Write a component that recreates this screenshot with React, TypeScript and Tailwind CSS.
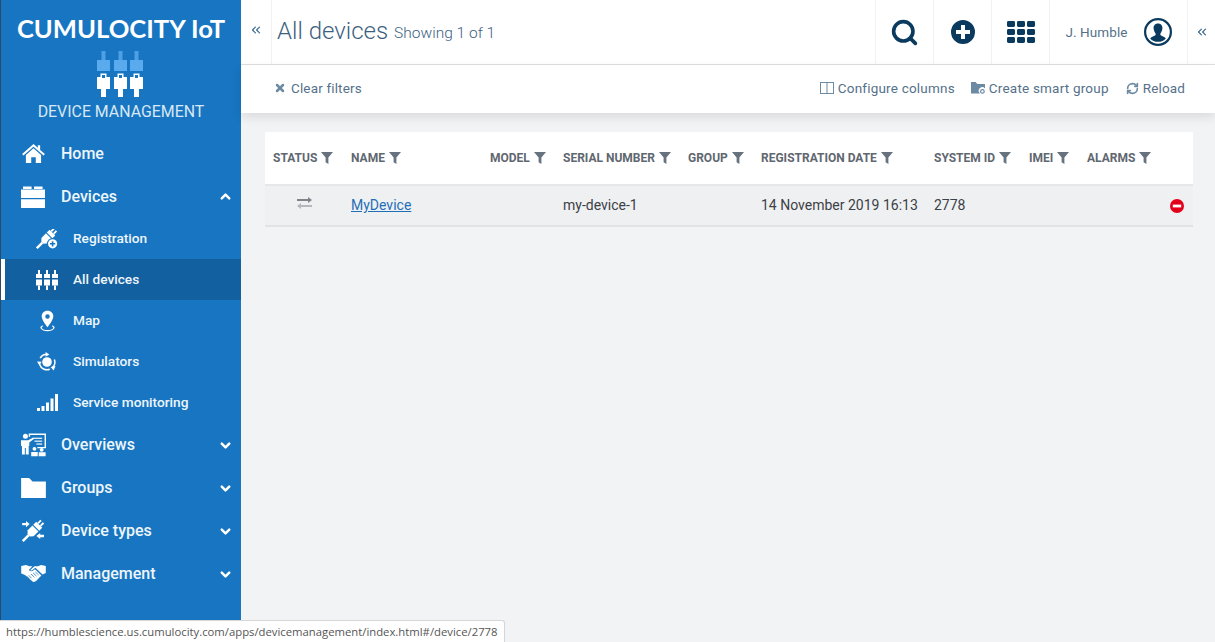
import React from 'react';
import { ChevronDown, ChevronUp, ChevronsLeft, Search, X, RefreshCw } from 'lucide-react';

type IconProps = { className?: string };

const HomeIcon = ({ className }: IconProps) => (
  <svg viewBox="0 0 24 20" className={className} fill="currentColor">
    <path d="M12 0 L16.5 4 V1.2 H19 V6.2 L24 10.6 L22.6 12 L12 2.8 L1.4 12 L0 10.6 Z" />
    <path d="M4 11.6 L12 4.6 L20 11.6 V20 H14.4 V14 H9.6 V20 H4 Z" />
  </svg>
);

const BoxesIcon = ({ className }: IconProps) => (
  <svg viewBox="0 0 24 22" className={className} fill="currentColor">
    <path d="M2 .5 H10.6 V3 H2 Z M13 .5 H21.6 V3 H13 Z" />
    <path d="M0 3.6 H24 V12 H0 Z M0 13.2 H24 V22 H0 Z" />
  </svg>
);

const PlugsIcon = ({ className }: IconProps) => (
  <svg viewBox="0 0 22 20" className={className} fill="currentColor">
    {[0, 8, 16].map(x => (
      <g key={x}>
        <rect x={x + 2} y={0} width={2} height={4} />
        <rect x={x} y={4} width={6} height={4} />
        <rect x={x} y={9.5} width={6} height={6} />
        <rect x={x + 2} y={15.5} width={2} height={4.5} />
      </g>
    ))}
  </svg>
);

const LogoPlugs = ({ className }: IconProps) => (
  <svg viewBox="0 0 48 46" className={className}>
    {[0, 17, 33].map(x => (
      <g key={x}>
        <rect x={x + 4.5} y={0} width={4} height={9} fill="#4d9fe6" />
        <rect x={x} y={9} width={13} height={11} fill="#5aaaee" />
        <path d={`M${x} 26 H${x + 3.5} V22.5 H${x + 9.5} V26 H${x + 13} V38 H${x + 9} V46 H${x + 4} V38 H${x} Z`} fill="#fff" />
        <rect x={x + 5} y={24} width={3} height={3} fill="#1775c1" />
      </g>
    ))}
  </svg>
);

// diagonal plug shared by the registration and device types icons
const DiagonalPlug = ({ x, y, scale = 1 }: { x: number; y: number; scale?: number }) => (
  <g transform={`translate(${x} ${y}) rotate(45) scale(${scale})`}>
    <rect x="-2.6" y="-12.5" width="1.8" height="4" />
    <rect x="0.8" y="-12.5" width="1.8" height="4" />
    <rect x="-4" y="-8.5" width="8" height="4" />
    <path d="M-4 -3.4 H4 V3 L1.6 5.6 H-1.6 L-4 3 Z" />
    <rect x="-1.2" y="5.6" width="2.4" height="8" />
  </g>
);

const PlugPlusIcon = ({ className }: IconProps) => (
  <svg viewBox="0 0 22 20" className={className} fill="currentColor">
    <DiagonalPlug x={10.4} y={9.6} />
    <circle cx="16.6" cy="14.8" r="5.8" fill="#1775c1" />
    <circle cx="16.6" cy="14.8" r="4.6" />
    <path d="M15.8 12.2 H17.4 V14 H19.2 V15.6 H17.4 V17.4 H15.8 V15.6 H14 V14 H15.8 Z" fill="#1775c1" />
  </svg>
);

const MapPinIcon = ({ className }: IconProps) => (
  <svg viewBox="0 0 16 22" className={className} fill="currentColor">
    <path fillRule="evenodd" d="M8 0 C12 0 14.2 2.8 14.2 6 C14.2 9.4 10.6 14.4 8 17.6 C5.4 14.4 1.8 9.4 1.8 6 C1.8 2.8 4 0 8 0 Z M8 3.8 A2.4 2.4 0 1 0 8 8.6 A2.4 2.4 0 1 0 8 3.8 Z" />
    <path d="M3 15.4 C.6 16.4 0 17.6 .6 18.8 C1.6 21 5 22 8 22 C11 22 14.4 21 15.4 18.8 C16 17.6 15.4 16.4 13 15.4 L13 16.8 C14.2 17.4 14.4 18 14 18.6 C13.2 20 10.6 20.7 8 20.7 C5.4 20.7 2.8 20 2 18.6 C1.6 18 1.8 17.4 3 16.8 Z" />
  </svg>
);

const SimulatorIcon = ({ className }: IconProps) => (
  <svg viewBox="0 0 20 20" className={className} fill="currentColor">
    <circle cx="10" cy="10" r="4.8" />
    <g fill="none" stroke="currentColor" strokeWidth="1.5">
      <path d="M3.2 6.2 A7.8 7.8 0 0 1 9 2.3" />
      <path d="M17.4 7.4 A7.8 7.8 0 0 1 15.4 15.6" />
      <path d="M12.8 17.3 A7.8 7.8 0 0 1 2.6 12.2" />
    </g>
    <path d="M8.6 0 L12.4 2.4 L8.6 4.8 Z" />
    <path d="M18.6 14 L16.6 18.4 L13.6 15 Z" />
    <path d="M0 9.6 L4.6 9.8 L2.4 13.6 Z" />
  </svg>
);

const SignalIcon = ({ className }: IconProps) => (
  <svg viewBox="0 0 21 17" className={className} fill="currentColor">
    <rect x="0" y="14" width="3" height="3" />
    <rect x="4.5" y="12" width="3" height="5" />
    <rect x="9" y="8.5" width="3" height="8.5" />
    <rect x="13.5" y="4.5" width="3" height="12.5" />
    <rect x="18" y="0" width="3" height="17" />
  </svg>
);

const OverviewIcon = ({ className }: IconProps) => (
  <svg viewBox="0 0 26 24" className={className} fill="currentColor">
    <path fillRule="evenodd" d="M8 0 H26 V15.5 H17 V14 H24.5 V1.5 H9.5 V3.5 H8 Z" />
    <rect x="12" y="4.4" width="10" height="1.2" />
    <rect x="14" y="7.4" width="8" height="1.2" />
    <rect x="16" y="10.4" width="6" height="1.2" />
    <circle cx="4.6" cy="3" r="2.6" />
    <path d="M0 7 H7.4 L12.4 4.4 L13.4 5.8 L8.6 9.4 V13 H8 V22 H5 V15 H4 V22 H1 V13 H0 Z" />
    <circle cx="14" cy="16" r="2" />
    <circle cx="21.5" cy="17" r="2" />
    <path d="M10.6 19.4 H17.4 V23.6 H10.6 Z M18.4 19.6 H25.6 V23.6 H18.4 Z" />
  </svg>
);

const FolderIcon = ({ className }: IconProps) => (
  <svg viewBox="0 0 26 21" className={className} fill="currentColor">
    <path d="M0 0 H8.4 L12 3.8 H26 V21 H0 Z" />
  </svg>
);

const CrossPlugIcon = ({ className }: IconProps) => (
  <svg viewBox="0 0 25 24" className={className} fill="currentColor">
    <DiagonalPlug x={12.4} y={12} scale={1.1} />
    <path d="M1.2 3.6 H5.2 V1.6 L9 4.8 L5.2 8 V6 H1.2 Z" />
    <path d="M24 16 H20 V14 L16 17.2 L20 20.4 V18.4 H24 Z" />
  </svg>
);

const HandshakeIcon = ({ className }: IconProps) => (
  <svg viewBox="0 0 26 18" className={className} fill="currentColor">
    <path d="M0 1 L5 0 C7.4 1.2 9.4 1.6 12 1.4 L8 5.4 C9.2 7 11.4 7 13 5.6 L14.6 4.4 L21.4 11 L17 15.6 C15.6 17.4 13.6 18.4 12 17.6 L4 10.6 L0 9 Z" />
    <path d="M14 1.2 C16.6 1.6 18.6 1 21 0 L26 1 V8.6 L22.6 10 L15 3 L11.6 5.6 C10.8 6 10 5.8 9.6 5.2 Z" />
    <g stroke="#1775c1" strokeWidth=".8" fill="none">
      <path d="M8 11 L11 14 M10.4 9.6 L14 13 M12.6 8.4 L16.2 11.8 M15 7.4 L18.4 10.6 M6 12 L9 15" />
    </g>
  </svg>
);

const FilterIcon = ({ className }: IconProps) => (
  <svg viewBox="0 0 12 12" className={className} fill="currentColor">
    <path d="M0 0 H12 L7.4 5.4 V12 L4.6 10.2 V5.4 Z" />
  </svg>
);

const ColumnsIcon = ({ className }: IconProps) => (
  <svg viewBox="0 0 14 12" className={className} fill="none" stroke="currentColor" strokeWidth="1">
    <rect x=".5" y=".5" width="13" height="11" />
    <path d="M7 .5 V11.5" />
  </svg>
);

const SmartFolderIcon = ({ className }: IconProps) => (
  <svg viewBox="0 0 14 12" className={className} fill="currentColor">
    <path d="M0 0 H4.6 L6.4 2 H14 V6.4 A3.4 3.4 0 0 0 8.6 11 V11.6 H0 Z" />
    <circle cx="11.4" cy="9.4" r="1.8" fill="none" stroke="currentColor" strokeWidth="1.2" />
  </svg>
);

const UserCircleIcon = ({ className }: IconProps) => (
  <svg viewBox="0 0 28 28" className={className} fill="currentColor">
    <path fillRule="evenodd" d="M14 0 A14 14 0 1 1 14 28 A14 14 0 1 1 14 0 Z M14 2.2 A11.8 11.8 0 1 0 14 25.8 A11.8 11.8 0 1 0 14 2.2 Z" />
    <path d="M14 5.4 C17 5.4 18.6 7.6 18.4 10.6 C18.2 12.8 17.4 14.4 16.4 15.4 V17 C17.4 18 20.8 18.8 21.8 20.4 C20 22.6 17.2 23.8 14 23.8 C10.8 23.8 8 22.6 6.2 20.4 C7.2 18.8 10.6 18 11.6 17 V15.4 C10.6 14.4 9.8 12.8 9.6 10.6 C9.4 7.6 11 5.4 14 5.4 Z" />
  </svg>
);

const PlusCircleIcon = ({ className }: IconProps) => (
  <svg viewBox="0 0 24 24" className={className} fill="currentColor">
    <path fillRule="evenodd" d="M12 0 A12 12 0 1 1 12 24 A12 12 0 1 1 12 0 Z M10 5 V10 H5 V14 H10 V19 H14 V14 H19 V10 H14 V5 Z" />
  </svg>
);

const AppsIcon = ({ className }: IconProps) => (
  <svg viewBox="0 0 28 22" className={className} fill="currentColor">
    {[0, 10, 20].map(x =>
      [0, 8, 16].map(y => <rect key={`${x}-${y}`} x={x} y={y} width={8} height={6} rx={1.4} />)
    )}
  </svg>
);

const ExchangeIcon = ({ className }: IconProps) => (
  <svg viewBox="0 0 15 12" className={className}>
    <path d="M0 2 H11 V0 L15 3 L11 6 V4 H0 Z" fill="#7d8389" />
    <path d="M15 8 H4 V6 L0 9 L4 12 V10 H15 Z" fill="#b4b8bc" />
  </svg>
);

const AlarmIcon = ({ className }: IconProps) => (
  <svg viewBox="0 0 14 14" className={className}>
    <circle cx="7" cy="7" r="7" fill="#e2001a" />
    <rect x="2.8" y="5.6" width="8.4" height="2.8" fill="#fff" />
  </svg>
);

const NavItem = ({ icon, label, open }: { icon: React.ReactNode; label: string; open?: boolean }) => (
  <div className="h-[43px] flex items-center relative text-white">
    <div className="w-[60px] flex justify-center pl-[4px] shrink-0">{icon}</div>
    <span className="text-[16px] font-medium text-[#eef5fb]">{label}</span>
    {open === undefined ? null : open ? (
      <ChevronUp className="absolute right-[8px] top-[14px] w-[15px] h-[15px]" strokeWidth={4} />
    ) : (
      <ChevronDown className="absolute right-[8px] top-[15px] w-[15px] h-[15px]" strokeWidth={4} />
    )}
  </div>
);

const SubItem = ({ icon, label, active }: { icon: React.ReactNode; label: string; active?: boolean }) => (
  <div className={`h-[41px] flex items-center text-white border-l-4 ${active ? 'bg-[#12609f] border-white' : 'border-transparent'}`}>
    <div className="w-[68px] flex justify-center pl-[16px] shrink-0">{icon}</div>
    <span className="text-[13.7px] font-medium text-[#eef5fb]">{label}</span>
  </div>
);

const columns = [
  { label: 'STATUS', className: 'w-[78px]' },
  { label: 'NAME', className: 'w-[139px]' },
  { label: 'MODEL', className: 'w-[73px]' },
  { label: 'SERIAL NUMBER', className: 'w-[125px]' },
  { label: 'GROUP', className: 'w-[73px]' },
  { label: 'REGISTRATION DATE', className: 'w-[173px]' },
  { label: 'SYSTEM ID', className: 'w-[95px]' },
  { label: 'IMEI', className: 'w-[58px]' },
  { label: 'ALARMS', className: 'w-[114px]' },
];

const HeaderCell = ({ children, className }: { children: React.ReactNode; className?: string }) => (
  <div className={`h-full flex items-center justify-center border-l border-[#f2f2f2] text-[#0b3a5f] ${className}`}>{children}</div>
);

export default function App() {
  return (
    <div className="relative w-[1215px] h-[642px] overflow-hidden flex bg-[#f2f3f5] font-['Roboto',sans-serif]">
      {/* Sidebar */}
      <aside className="w-[241px] shrink-0 bg-[#1775c1] border-l border-[#2a4a68] flex flex-col">
        <div className="h-[132px] flex flex-col items-center">
          <div className="mt-[10px] text-[25.6px] leading-[36px] font-bold text-white font-['Lato',sans-serif] whitespace-nowrap">
            CUMULOCITY IoT
          </div>
          <LogoPlugs className="w-[48px] h-[46px] mt-[5px]" />
          <div className="mt-[5px] text-[15.9px] leading-[20px] text-[#d8e8f5]">DEVICE MANAGEMENT</div>
        </div>
        <NavItem icon={<HomeIcon className="w-[23px] h-[19px]" />} label="Home" />
        <NavItem icon={<BoxesIcon className="w-[24px] h-[22px]" />} label="Devices" open />
        <SubItem icon={<PlugPlusIcon className="w-[22px] h-[20px]" />} label="Registration" />
        <SubItem icon={<PlugsIcon className="w-[22px] h-[20px]" />} label="All devices" active />
        <SubItem icon={<MapPinIcon className="w-[15px] h-[22px]" />} label="Map" />
        <SubItem icon={<SimulatorIcon className="w-[20px] h-[20px]" />} label="Simulators" />
        <SubItem icon={<SignalIcon className="w-[21px] h-[17px]" />} label="Service monitoring" />
        <NavItem icon={<OverviewIcon className="w-[25px] h-[24px]" />} label="Overviews" open={false} />
        <NavItem icon={<FolderIcon className="w-[25px] h-[20px]" />} label="Groups" open={false} />
        <NavItem icon={<CrossPlugIcon className="w-[24px] h-[24px]" />} label="Device types" open={false} />
        <NavItem icon={<HandshakeIcon className="w-[25px] h-[17px]" />} label="Management" open={false} />
      </aside>

      {/* Main column */}
      <main className="flex-1 min-w-0 flex flex-col">
        <header className="h-[65px] bg-white border-b border-[#dfdfdf] flex items-stretch">
          <div className="w-[31px] border-r border-[#f2f2f2] flex items-center justify-center pb-[4px] text-[#3c6a90]">
            <ChevronsLeft className="w-[14px] h-[14px]" strokeWidth={2} />
          </div>
          <div className="flex-1 flex items-center pl-[5px] pb-[2px] text-[#3d5f7f]">
            <span className="text-[24px] font-light">All devices</span>
            <span className="text-[15.5px] font-light ml-[6px] mt-[5px]">Showing 1 of 1</span>
          </div>
          <HeaderCell className="w-[58px]">
            <Search className="w-[29px] h-[29px] -ml-[1px]" strokeWidth={3} />
          </HeaderCell>
          <HeaderCell className="w-[58px]">
            <PlusCircleIcon className="w-[24px] h-[24px]" />
          </HeaderCell>
          <HeaderCell className="w-[58px]">
            <AppsIcon className="w-[28px] h-[22px]" />
          </HeaderCell>
          <HeaderCell className="w-[138px] gap-[16px]">
            <span className="text-[13.5px] tracking-[0.1px] text-[#55718a]">J. Humble</span>
            <UserCircleIcon className="w-[28px] h-[28px]" />
          </HeaderCell>
          <div className="w-[28px] border-l border-[#f2f2f2] flex items-center justify-center pb-[1px] text-[#3c6a90]">
            <ChevronsLeft className="w-[14px] h-[14px]" strokeWidth={2} />
          </div>
        </header>

        {/* Action bar */}
        <div className="h-[48px] pb-[2px] bg-white shadow-[0_4px_10px_rgba(0,0,0,0.1)] flex items-center pl-[33px] pr-[30px] text-[13.5px] text-[#55718a]">
          <X className="w-[12px] h-[12px] mr-[5px] text-[#6c8aa3]" strokeWidth={5} />
          <span className="tracking-[0.15px]">Clear filters</span>
          <div className="ml-auto flex items-center">
            <ColumnsIcon className="w-[14px] h-[12px] mr-[4px] text-[#6c8aa3]" />
            <span className="tracking-[0.2px]">Configure columns</span>
            <SmartFolderIcon className="w-[14px] h-[12px] ml-[16px] mr-[4px] text-[#6c8aa3]" />
            <span className="tracking-[0.2px]">Create smart group</span>
            <RefreshCw className="w-[13px] h-[13px] ml-[17px] mr-[4px] text-[#6c8aa3]" strokeWidth={3} />
            <span className="tracking-[0.15px]">Reload</span>
          </div>
        </div>

        {/* Table */}
        <div className="pt-[19px] pl-[24px] pr-[22px]">
          <table className="w-[928px] table-fixed border-collapse">
            <thead>
              <tr className="h-[53px] bg-white border-b-2 border-[#e6e7e9]">
                {columns.map(col => (
                  <th key={col.label} className={`${col.className} pl-2 pb-[2px] text-left`}>
                    <span className="inline-flex items-center gap-[4px] text-[12px] font-bold text-[#5f6770] whitespace-nowrap">
                      {col.label}
                      <FilterIcon className="w-[12px] h-[12px] text-[#66727d]" />
                    </span>
                  </th>
                ))}
              </tr>
            </thead>
            <tbody>
              <tr className="h-[41px] border-b-2 border-[#e1e2e4] bg-[#eff0f2] text-[14px] text-[#3c4146]">
                <td className="pl-[32px] pb-[6px]">
                  <ExchangeIcon className="w-[15px] h-[12px]" />
                </td>
                <td className="pl-2">
                  <a className="underline text-[#1f6fb8]">MyDevice</a>
                </td>
                <td />
                <td className="pl-2">my-device-1</td>
                <td />
                <td className="pl-2 whitespace-nowrap">14 November 2019 16:13</td>
                <td className="pl-2">2778</td>
                <td />
                <td className="pr-[9px]">
                  <AlarmIcon className="w-[14px] h-[14px] ml-auto" />
                </td>
              </tr>
            </tbody>
          </table>
        </div>
      </main>

      {/* Browser status bubble */}
      <div className="absolute left-0 bottom-0 w-[505px] h-[22px] bg-white border-t border-r border-[#d6d6d6] rounded-tr-[3px] pl-[6px] text-[11.3px] leading-[22px] text-[#555] font-['Open_Sans',sans-serif] whitespace-nowrap">
        https://humblescience.us.cumulocity.com/apps/devicemanagement/index.html#/device/2778
      </div>
    </div>
  );
}
